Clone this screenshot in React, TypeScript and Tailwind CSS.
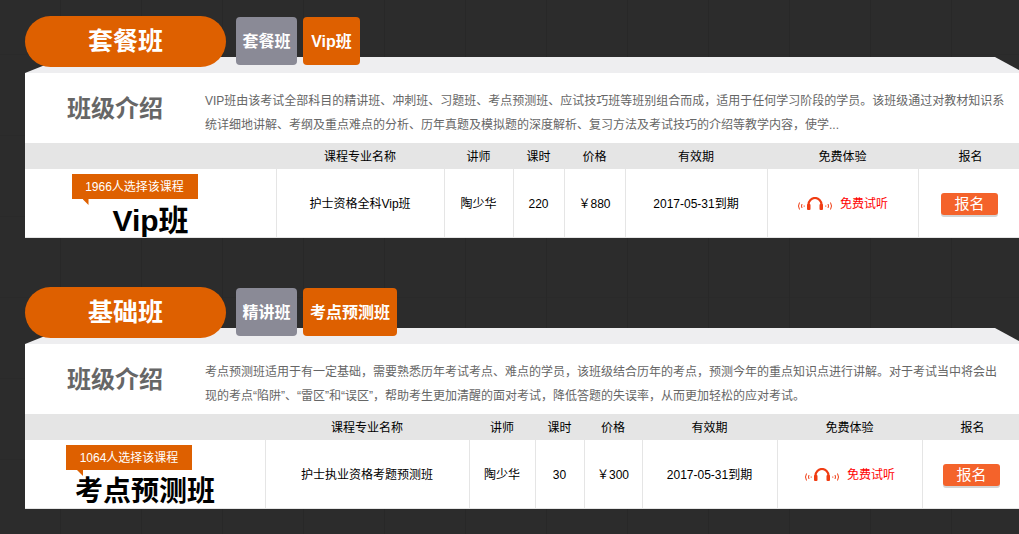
const plans = [
  {
    name: "套餐班",
    tabs: [
      { label: "套餐班", active: false, width: "w-[61px]" },
      { label: "Vip班", active: true, width: "w-[57px]" },
    ],
    intro:
      "VIP班由该考试全部科目的精讲班、冲刺班、习题班、考点预测班、应试技巧班等班别组合而成，适用于任何学习阶段的学员。该班级通过对教材知识系统详细地讲解、考纲及重点难点的分析、历年真题及模拟题的深度解析、复习方法及考试技巧的介绍等教学内容，使学...",
    cols: "grid-cols-[252px_168px_69px_51px_61px_142px_151px_100px]",
    picked: "1966人选择该课程",
    course: "Vip班",
    courseSize: "text-[30px]",
    fullName: "护士资格全科Vip班",
    teacher: "陶少华",
    hours: "220",
    price: "￥880",
  },
  {
    name: "基础班",
    tabs: [
      { label: "精讲班", active: false, width: "w-[61px]" },
      { label: "考点预测班", active: true, width: "w-[94px]" },
    ],
    intro:
      "考点预测班适用于有一定基础，需要熟悉历年考试考点、难点的学员，该班级结合历年的考点，预测今年的重点知识点进行讲解。对于考试当中将会出现的考点“陷阱”、“雷区”和“误区”，帮助考生更加清醒的面对考试，降低答题的失误率，从而更加轻松的应对考试。",
    cols: "grid-cols-[241px_204px_66px_49px_58px_135px_145px_96px]",
    picked: "1064人选择该课程",
    course: "考点预测班",
    courseSize: "text-[28px]",
    fullName: "护士执业资格考题预测班",
    teacher: "陶少华",
    hours: "30",
    price: "￥300",
  },
];

const headers = ["", "课程专业名称", "讲师", "课时", "价格", "有效期", "免费体验", "报名"];

function HeadsetIcon() {
  return (
    <svg width="36" height="14" viewBox="0 0 36 14" fill="none" stroke="#f03c12" className="shrink-0">
      <path d="M11.5 11V7.5a6.5 6.5 0 0 1 13 0V11" strokeWidth="2.2" />
      <rect x="10" y="7" width="3.5" height="6" rx="1" fill="#f03c12" stroke="none" />
      <rect x="22.5" y="7" width="3.5" height="6" rx="1" fill="#f03c12" stroke="none" />
      <path d="M2.5 5.5q-2 3.5 0 7M5 7q-1 2 0 4" strokeWidth="1" />
      <path d="M33.5 5.5q2 3.5 0 7M31 7q1 2 0 4" strokeWidth="1" />
      <path d="M7.2 8.5v1.2M28.8 8.5v1.2" strokeWidth="1" />
    </svg>
  );
}

function Cell({ children, last }: { children: React.ReactNode; last?: boolean }) {
  return (
    <div
      className={`flex items-center justify-center pt-[2px] ${last ? "pl-px" : "border-r border-[#e5e5e5] pr-px"}`}
    >
      {children}
    </div>
  );
}

function PlanSection({ plan }: { plan: (typeof plans)[number] }) {
  return (
    <section>
      <div className="relative z-10 flex h-[51px]">
        <div className="flex w-[201px] items-center justify-center rounded-full bg-[#de6000] pt-px text-[25px] font-bold text-white">
          {plan.name}
        </div>
        <div className="ml-[10px] mt-px flex h-[48px] gap-[6px]">
          {plan.tabs.map((tab) => (
            <div
              key={tab.label}
              className={`flex items-center justify-center rounded-[4px] pt-px text-[16px] font-bold text-white ${tab.width} ${
                tab.active ? "bg-[#de6000]" : "bg-[#8a8a96]"
              }`}
            >
              {tab.label}
            </div>
          ))}
        </div>
      </div>

      <div className="-mt-[10px] h-[16px] bg-[#eeeef0] [clip-path:polygon(40px_0,970px_0,994px_13px,994px_16px,0_16px)]" />

      <div className="flex h-[70px] bg-white">
        <div className="flex w-[180px] shrink-0 items-center justify-center pt-[2px] text-[24px] font-bold text-[#666]">
          班级介绍
        </div>
        <p className="w-[800px] break-all pt-[16px] text-[12px] leading-[24px] text-[#666]">{plan.intro}</p>
      </div>

      <div className={`grid h-[26px] bg-[#e5e5e5] text-[12px] text-black ${plan.cols}`}>
        {headers.map((h, i) => (
          <div
            key={i}
            className={`flex items-center justify-center pt-[2px] ${i === 7 ? "pl-[3px]" : "pr-[2px]"}`}
          >
            {h}
          </div>
        ))}
      </div>

      <div className={`grid h-[69px] border-b border-[#e5e5e5] bg-white text-[12px] text-black ${plan.cols}`}>
        <div className="flex flex-col items-center overflow-hidden border-r border-[#e5e5e5] pt-[5px]">
          <div className="relative mr-[32px] flex h-[25px] w-[126px] shrink-0 items-center justify-center bg-[#de6000] text-white">
            {plan.picked}
            <span className="absolute left-[11px] top-full h-[6px] w-[6px] bg-[#de6000] [clip-path:polygon(0_0,100%_0,100%_100%)]" />
          </div>
          <div className={`mt-[4px] font-bold leading-[36px] ${plan.courseSize}`}>{plan.course}</div>
        </div>
        <Cell>{plan.fullName}</Cell>
        <Cell>{plan.teacher}</Cell>
        <Cell>{plan.hours}</Cell>
        <Cell>{plan.price}</Cell>
        <Cell>2017-05-31到期</Cell>
        <Cell>
          <div className="flex items-center gap-[7px] text-[#f00]">
            <HeadsetIcon />
            免费试听
          </div>
        </Cell>
        <Cell last>
          <div className="flex h-[22px] w-[57px] items-center justify-center rounded-[3px] bg-[#f4632b] text-[15px] text-white shadow-[0_2px_0_#d4d4d4]">
            报名
          </div>
        </Cell>
      </div>
    </section>
  );
}

export default function App() {
  return (
    <div className="h-[534px] overflow-hidden bg-[#2c2c2c] bg-[linear-gradient(90deg,#282828_1px,transparent_1px),linear-gradient(0deg,#2a2a2a_1px,transparent_1px)] bg-[size:81px_81px] bg-[position:60px_55px] pl-[25px] pt-4 font-['Liberation_Sans','Noto_Sans_CJK_SC',sans-serif]">
      <div className="flex flex-col gap-[49px]">
        {plans.map((plan) => (
          <PlanSection key={plan.name} plan={plan} />
        ))}
      </div>
    </div>
  );
}
